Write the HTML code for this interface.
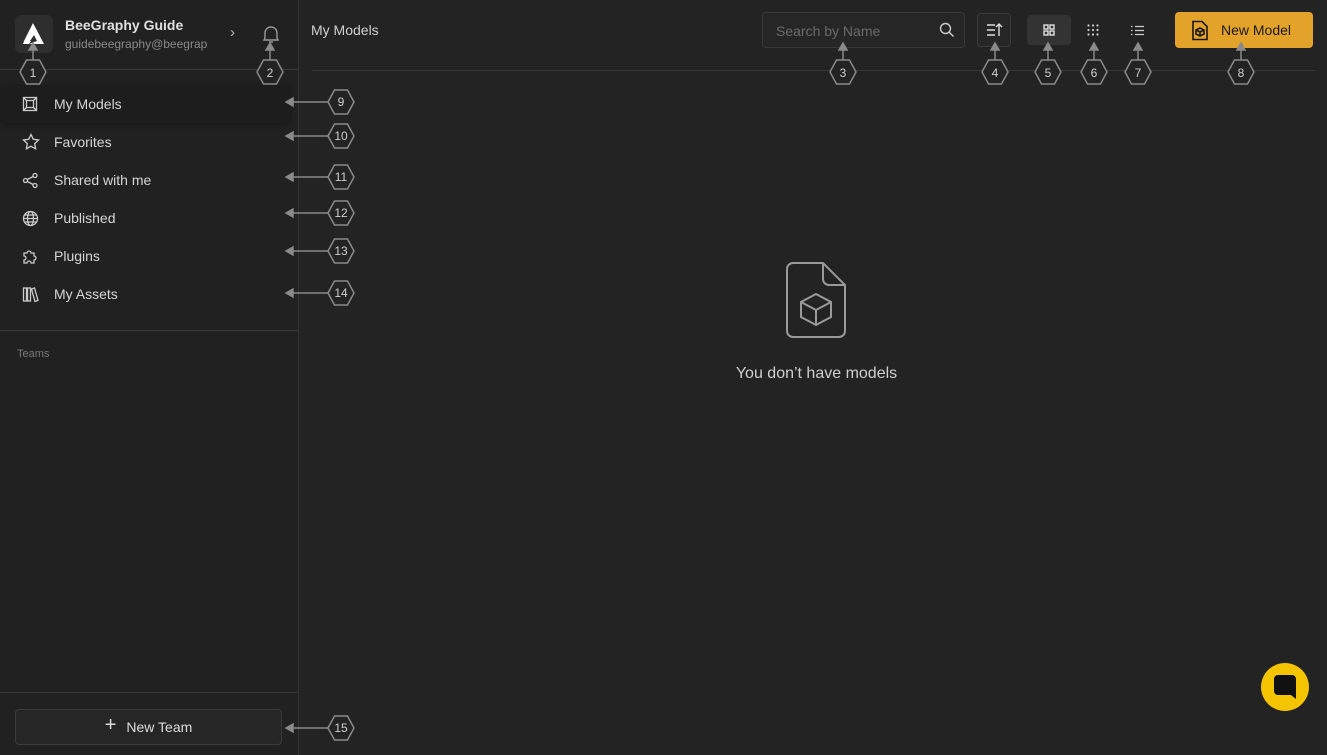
<!DOCTYPE html>
<html><head><meta charset="utf-8"><style>
*{box-sizing:border-box;margin:0;padding:0}
body{width:1327px;height:755px;background:#232323;font-family:"Liberation Sans",sans-serif;color:#ddd;position:relative;overflow:hidden}
.side{position:absolute;left:0;top:0;width:299px;height:755px;background:#212121;border-right:1px solid #333}
.abs{position:absolute}
.nav{position:absolute;left:0;width:290px;height:38px;display:flex;align-items:center;font-size:14px;color:#d6d6d6}
.nav svg{position:absolute;left:22px}
.nav span{position:absolute;left:54px}
</style></head><body>
<div class="side">
  <div class="abs" style="left:15px;top:15px;width:38px;height:38px;border-radius:6px;background:#2e2e2e"></div>
  <svg class="abs" style="left:20px;top:21px" width="28" height="26" viewBox="0 0 28 26"><path d="M13 2 L4 20 L10 20 L14 14 L17 20 L9 23 L24 23 Z" fill="#fff"/><path d="M3 23 L9 23 L11 20 L4 20Z" fill="#fff"/></svg>
  <div class="abs" style="left:65px;top:17px;font-size:14px;font-weight:bold;color:#e0e0e0">BeeGraphy Guide</div>
  <div class="abs" style="left:65px;top:37px;font-size:12px;color:#8a8a8a">guidebeegraphy@beegrap</div>
  <div class="abs" style="left:230px;top:24px;font-size:15px;color:#bbb">›</div>
  <svg class="abs" style="left:262px;top:24px" width="18" height="20" viewBox="0 0 18 20" fill="none" stroke="#999" stroke-width="1.4"><path d="M3 14 V9 a6 6 0 0 1 12 0 V14 L16 16 H2 Z"/><path d="M7 18 h4"/></svg>
  <div class="abs" style="left:0;top:69px;width:299px;height:1px;background:#383838"></div>
  <div class="abs" style="left:0;top:85px;width:290px;height:38px;background:#1d1d1d;border-radius:4px;box-shadow:0 2px 6px rgba(0,0,0,.3)"></div>
  <div class="nav" style="top:85px"><svg width="16" height="16" viewBox="0 0 16 16" fill="none" stroke="#ccc" stroke-width="1.3"><rect x="1.5" y="1.5" width="13" height="13"/><rect x="4.5" y="4.5" width="7" height="7"/><path d="M1.5 1.5l3 3M14.5 1.5l-3 3M1.5 14.5l3-3M14.5 14.5l-3-3"/></svg><span>My Models</span></div>
  <div class="nav" style="top:123px"><svg width="18" height="18" viewBox="0 0 18 18" fill="none" stroke="#ccc" stroke-width="1.3"><path d="M9 1.5l2.3 4.8 5.2.7-3.8 3.6.9 5.2L9 13.3l-4.6 2.5.9-5.2L1.5 7l5.2-.7z"/></svg><span>Favorites</span></div>
  <div class="nav" style="top:161px"><svg width="17" height="17" viewBox="0 0 17 17" fill="none" stroke="#ccc" stroke-width="1.3"><circle cx="3.5" cy="8.5" r="2"/><circle cx="13" cy="3.5" r="2"/><circle cx="13" cy="13.5" r="2"/><path d="M5.3 7.5l5.9-3M5.3 9.5l5.9 3"/></svg><span>Shared with me</span></div>
  <div class="nav" style="top:199px"><svg width="17" height="17" viewBox="0 0 17 17" fill="none" stroke="#ccc" stroke-width="1.3"><circle cx="8.5" cy="8.5" r="7"/><ellipse cx="8.5" cy="8.5" rx="3" ry="7"/><path d="M1.5 8.5h14M2.5 5h12M2.5 12h12"/></svg><span>Published</span></div>
  <div class="nav" style="top:237px"><svg width="17" height="17" viewBox="0 0 17 17" fill="none" stroke="#ccc" stroke-width="1.3"><path d="M2 5h3a2 2 0 1 1 4 0h3v3a2 2 0 1 1 0 4v3H9a2 2 0 1 0-4 0H2v-3a2 2 0 1 0 0-4z"/></svg><span>Plugins</span></div>
  <div class="nav" style="top:275px"><svg width="17" height="17" viewBox="0 0 17 17" fill="none" stroke="#ccc" stroke-width="1.3"><rect x="1.5" y="2" width="3" height="13"/><rect x="5.5" y="2" width="3" height="13"/><path d="M9.5 3l3-1 3.5 12.5-3 1z"/></svg><span>My Assets</span></div>
  <div class="abs" style="left:0;top:330px;width:299px;height:1px;background:#383838"></div>
  <div class="abs" style="left:17px;top:348px;font-size:11px;color:#777">Teams</div>
  <div class="abs" style="left:0;top:692px;width:299px;height:1px;background:#383838"></div>
  <div class="abs" style="left:15px;top:709px;width:267px;height:36px;border:1px solid #3a3a3a;border-radius:4px;background:#262626;display:flex;align-items:center;justify-content:center;font-size:14px;color:#ddd"><span style="font-size:20px;font-weight:300;margin-right:10px;margin-top:-3px">+</span>New Team</div>
</div>

<div class="abs" style="left:311px;top:22px;font-size:14px;color:#d0d0d0">My Models</div>
<div class="abs" style="left:312px;top:70px;width:1003px;height:1px;background:#383838"></div>
<div class="abs" style="left:762px;top:12px;width:203px;height:36px;border:1px solid #383838;border-radius:4px;background:#262626"></div>
<div class="abs" style="left:776px;top:23px;font-size:14px;color:#6b6b6b">Search by Name</div>
<svg class="abs" style="left:939px;top:22px" width="16" height="16" viewBox="0 0 16 16" fill="none" stroke="#ccc" stroke-width="1.4"><circle cx="6.5" cy="6.5" r="5"/><path d="M10 10l4.5 4.5"/></svg>
<div class="abs" style="left:977px;top:13px;width:34px;height:34px;border:1px solid #3a3a3a;border-radius:4px;background:#262626"></div>
<svg class="abs" style="left:986px;top:22px" width="17" height="16" viewBox="0 0 17 16" fill="none" stroke="#ddd" stroke-width="1.4"><path d="M1 3h8M1 8h8M1 13h8M13 14V2M10 5l3-3 3 3"/></svg>
<div class="abs" style="left:1027px;top:15px;width:44px;height:30px;border-radius:4px;background:#333"></div>
<svg class="abs" style="left:1043px;top:24px" width="12" height="12" viewBox="0 0 12 12" fill="none" stroke="#eee" stroke-width="1.3"><rect x="1" y="1" width="4" height="4"/><rect x="7" y="1" width="4" height="4"/><rect x="1" y="7" width="4" height="4"/><rect x="7" y="7" width="4" height="4"/></svg>
<svg class="abs" style="left:1087px;top:24px" width="12" height="12" viewBox="0 0 12 12" fill="#ccc"><circle cx="1.5" cy="1.5" r="1.1"/><circle cx="6" cy="1.5" r="1.1"/><circle cx="10.5" cy="1.5" r="1.1"/><circle cx="1.5" cy="6" r="1.1"/><circle cx="6" cy="6" r="1.1"/><circle cx="10.5" cy="6" r="1.1"/><circle cx="1.5" cy="10.5" r="1.1"/><circle cx="6" cy="10.5" r="1.1"/><circle cx="10.5" cy="10.5" r="1.1"/></svg>
<svg class="abs" style="left:1131px;top:25px" width="13" height="11" viewBox="0 0 13 11" fill="none" stroke="#ccc" stroke-width="1.3"><path d="M0 1.5h1.5M0 5.5h1.5M0 9.5h1.5M4 1.5h9M4 5.5h9M4 9.5h9"/></svg>
<div class="abs" style="left:1175px;top:12px;width:138px;height:36px;border-radius:4px;background:#e3a229;display:flex;align-items:center;font-size:14px;color:#1a1a1a"><span style="position:absolute;left:46px">New Model</span></div>
<svg class="abs" style="left:1191px;top:20px" width="18" height="21" viewBox="0 0 18 21" fill="none" stroke="#1a1a1a" stroke-width="1.6"><path d="M2 1.5h9l5 5v13H2z"/><path d="M9 8l4 2v4l-4 2-4-2v-4z M5 10l4 2 4-2M9 12v4"/></svg>

<svg class="abs" style="left:785px;top:261px" width="62" height="78" viewBox="0 0 62 78" fill="none" stroke="#9a9a9a" stroke-width="2"><path d="M8 2h30l22 22v46a6 6 0 0 1-6 6H8a6 6 0 0 1-6-6V8a6 6 0 0 1 6-6z"/><path d="M38 2v16a6 6 0 0 0 6 6h16"/><path d="M31 33l15 8v15l-15 8-15-8V41z M16 41l15 8 15-8M31 49v15"/></svg>
<div class="abs" style="left:0;top:365px;width:1633px;text-align:center;font-size:16px;color:#cfcfcf">You don’t have models</div>

<div class="abs" style="left:1261px;top:663px;width:48px;height:48px;border-radius:50%;background:#f5c400"></div>
<svg class="abs" style="left:1274px;top:675px" width="22" height="24" viewBox="0 0 22 24"><path d="M4 0h14a4 4 0 0 1 4 4v20l-5-4H4a4 4 0 0 1-4-4V4a4 4 0 0 1 4-4z" fill="#111"/></svg>

<svg class="abs" style="left:0;top:0" width="1327" height="755" fill="none" stroke="#8a8a8a" stroke-width="1.5" font-family="Liberation Sans" font-size="12">
<defs><g id="h"><path d="M-13 0l6.5-12h13L13 0l-6.5 12h-13z" stroke="#8a8a8a" fill="#232323"/></g></defs>
<g>
<path d="M33 61V46M270 61V46M843 61V46M995 61V46M1048 61V46M1094 61V46M1138 61V46M1241 61V46"/>
<path d="M29 50l4-7 4 7zM266 50l4-7 4 7zM839 50l4-7 4 7zM991 50l4-7 4 7zM1044 50l4-7 4 7zM1090 50l4-7 4 7zM1134 50l4-7 4 7zM1237 50l4-7 4 7z" fill="#8a8a8a"/>
<path d="M290 102h38M290 136h38M290 177h38M290 213h38M290 251h38M290 293h38M290 728h38"/>
<path d="M286 102l7-4v8zM286 136l7-4v8zM286 177l7-4v8zM286 213l7-4v8zM286 251l7-4v8zM286 293l7-4v8zM286 728l7-4v8z" fill="#8a8a8a"/>
</g>
<g fill="#232323">
<use href="#h" x="33" y="72"/><use href="#h" x="270" y="72"/><use href="#h" x="843" y="72"/><use href="#h" x="995" y="72"/><use href="#h" x="1048" y="72"/><use href="#h" x="1094" y="72"/><use href="#h" x="1138" y="72"/><use href="#h" x="1241" y="72"/>
<use href="#h" x="341" y="102"/><use href="#h" x="341" y="136"/><use href="#h" x="341" y="177"/><use href="#h" x="341" y="213"/><use href="#h" x="341" y="251"/><use href="#h" x="341" y="293"/><use href="#h" x="341" y="728"/>
</g>
<g fill="#d0d0d0" stroke="none" text-anchor="middle">
<text x="33" y="77">1</text><text x="270" y="77">2</text><text x="843" y="77">3</text><text x="995" y="77">4</text><text x="1048" y="77">5</text><text x="1094" y="77">6</text><text x="1138" y="77">7</text><text x="1241" y="77">8</text>
<text x="341" y="106">9</text><text x="341" y="140">10</text><text x="341" y="181">11</text><text x="341" y="217">12</text><text x="341" y="255">13</text><text x="341" y="297">14</text><text x="341" y="732">15</text>
</g>
</svg>
</body></html>
